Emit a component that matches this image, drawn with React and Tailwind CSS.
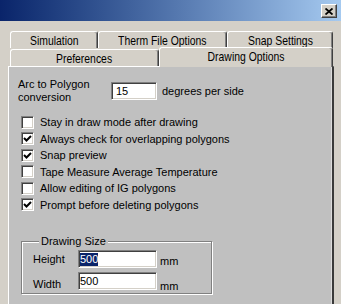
import React from 'react';

const options = [
  { label: 'Stay in draw mode after drawing', checked: false },
  { label: 'Always check for overlapping polygons', checked: true },
  { label: 'Snap preview', checked: true },
  { label: 'Tape Measure Average Temperature', checked: false },
  { label: 'Allow editing of IG polygons', checked: false },
  { label: 'Prompt before deleting polygons', checked: true },
];

const sunken =
  'bg-white border border-t-[#808080] border-l-[#808080] border-r-white border-b-white shadow-[inset_1px_1px_0_#404040,inset_-1px_-1px_0_#d4d0c8]';

function Tab({ label, className = '' }) {
  return (
    <div
      className={`flex items-center justify-center bg-[#d4d0c8] border-t border-l border-t-white border-l-white border-r border-r-[#404040] shadow-[inset_-1px_0_0_#808080] rounded-t-[3px] ${className}`}
    >
      <span className="inline-block scale-x-80 whitespace-nowrap text-[13px] leading-none text-black">
        {label}
      </span>
    </div>
  );
}

function CheckBox({ checked }) {
  return (
    <span className={`w-[13px] h-[13px] flex items-center justify-center shrink-0 ${sunken}`}>
      {checked && (
        <svg width="9" height="9" viewBox="0 0 9 9">
          <path d="M1 4 L3.5 6.5 L8 2" fill="none" stroke="#000" strokeWidth="2" />
        </svg>
      )}
    </span>
  );
}

export default function App() {
  return (
    <div className="w-[341px] h-[304px] overflow-hidden bg-[#d4d0c8] [font-family:'Liberation_Sans',Arial,sans-serif] text-[11px] text-black">
      {/* title bar */}
      <div className="h-[21px] flex justify-end items-start bg-linear-to-r from-[#0a246a] to-[#a6caf0]">
        <div className="mt-[4px] mr-[4px] w-[16px] h-[14px] flex items-center justify-center bg-[#d4d0c8] border border-t-white border-l-white border-r-[#404040] border-b-[#404040] shadow-[inset_-1px_-1px_0_#808080]">
          <svg width="8" height="7" viewBox="0 0 8 7">
            <path d="M0.5 0.5 L7.5 6.5 M7.5 0.5 L0.5 6.5" stroke="#000" strokeWidth="1.8" />
          </svg>
        </div>
      </div>

      {/* back tab row */}
      <div className="mt-[10px] pl-[10px] flex h-[17px]">
        <Tab label="Simulation" className="w-[88px]" />
        <Tab label="Therm File Options" className="w-[129px]" />
        <Tab label="Snap Settings" className="w-[106px]" />
      </div>

      {/* front tab row */}
      <div className="-mt-[1px] pl-[10px] flex items-end h-[19px]">
        <Tab label="Preferences" className="w-[149px] h-[17px]" />
        <Tab label="Drawing Options" className="w-[174px] h-[20px] -mb-[1px] relative z-10 pb-[2px]" />
      </div>

      {/* page */}
      <div className="ml-[8px] w-[326px] h-[238px] bg-[#c0c0c0] border-t border-l border-t-white border-l-white border-r-2 border-r-[#3a3a3a] shadow-[inset_-1px_0_0_#dcdcdc] pt-[11px]">
        <div className="pl-[9px] flex items-center h-[26px]">
          <div className="w-[93px] leading-[13px]">
            Arc to Polygon
            <br />
            conversion
          </div>
          <div className={`w-[46px] h-[18px] flex items-center pl-[4px] ${sunken}`}>15</div>
          <span className="ml-[5px]">degrees per side</span>
        </div>

        <div className="mt-[10px] pl-[12px] flex flex-col">
          {options.map((o) => (
            <div key={o.label} className="h-[16.5px] flex items-center gap-[6px]">
              <CheckBox checked={o.checked} />
              <span className="whitespace-nowrap">{o.label}</span>
            </div>
          ))}
        </div>

        <fieldset className="mt-[21px] ml-[12px] w-[191px] border border-[#808080] shadow-[inset_1px_1px_0_#fff,1px_1px_0_#fff] pl-[11px] pt-[2px] pb-[3px] flex flex-col gap-[4px]">
          <legend className="ml-[6px] px-[2px] leading-[14px] bg-[#c0c0c0]">Drawing Size</legend>
          <div className="flex items-center h-[18px]">
            <span className="w-[45px]">Height</span>
            <div className={`w-[79px] h-[18px] flex items-center pl-[1px] ${sunken}`}>
              <span className="bg-[#0a246a] text-white leading-[13px]">500</span>
            </div>
            <span className="ml-[3px] translate-y-[2px]">mm</span>
          </div>
          <div className="flex items-center h-[18px]">
            <span className="w-[45px] translate-y-[3px]">Width</span>
            <div className={`w-[79px] h-[18px] flex items-center pl-[1px] ${sunken}`}>500</div>
            <span className="ml-[3px] translate-y-[5px]">mm</span>
          </div>
        </fieldset>
      </div>
    </div>
  );
}
